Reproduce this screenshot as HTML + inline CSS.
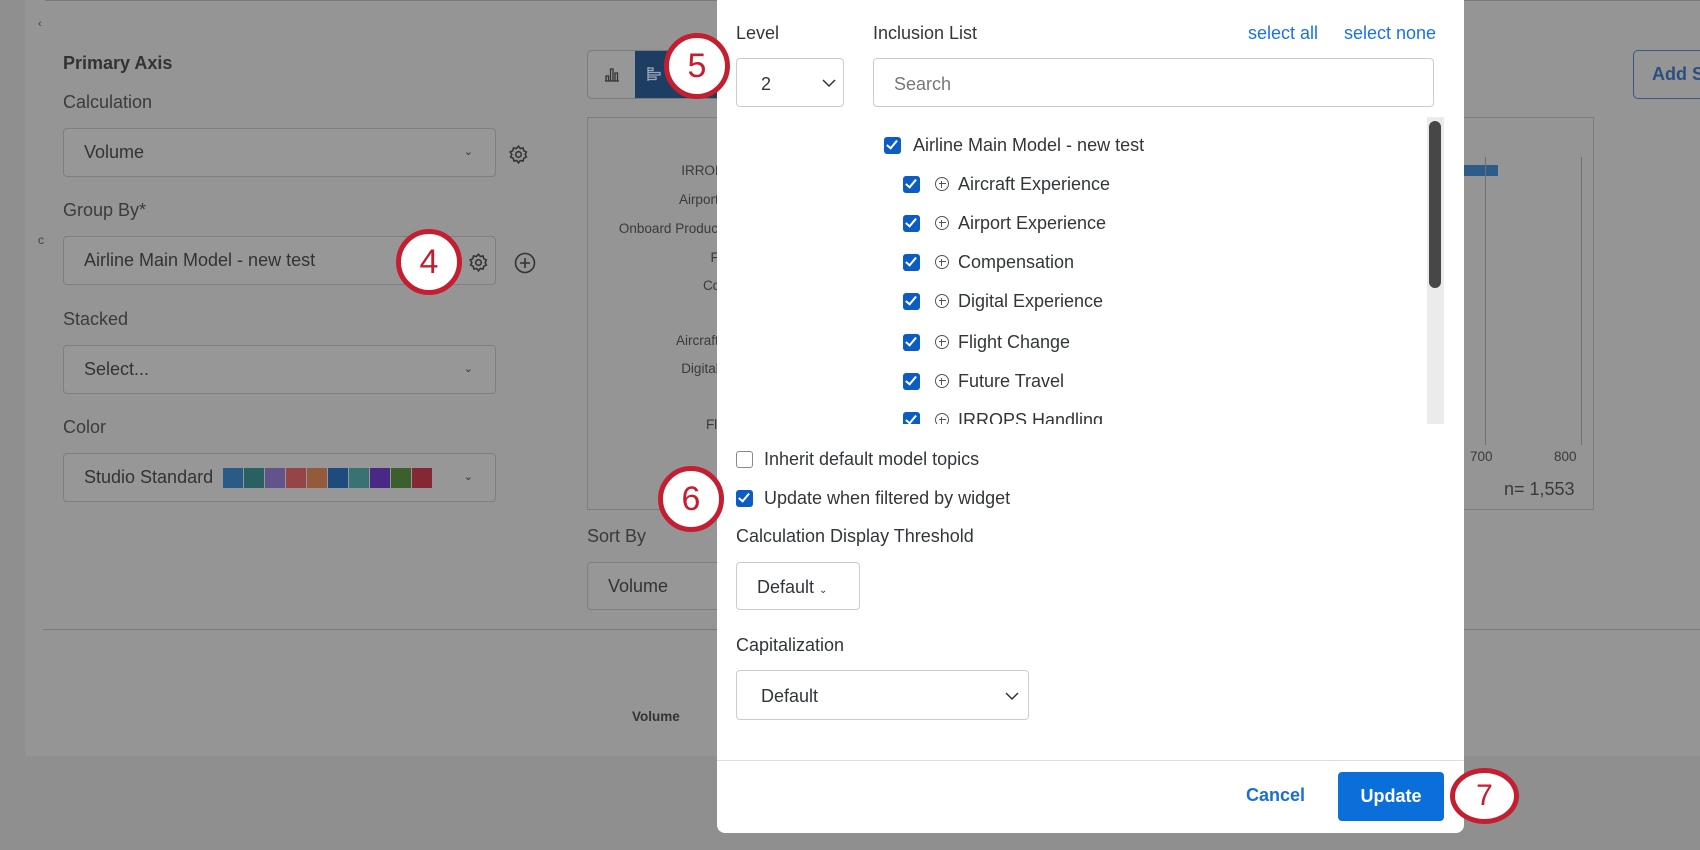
<!DOCTYPE html>
<html><head><meta charset="utf-8"><style>
*{box-sizing:border-box;margin:0;padding:0}
body{width:1700px;height:850px;overflow:hidden;background:#8f8f8f;font-family:"Liberation Sans",sans-serif;position:relative;color:#3a3a3a}
.a{position:absolute}
.panel{left:25px;top:0;width:1675px;height:756px;background:#959595}
.lbl{font-size:18px;color:#3b3b3b}
.sel{border:1px solid #7f7f7f;border-radius:4px;background:#979797;font-size:18px;color:#333;padding-left:20px;display:flex;align-items:center}
.car{position:absolute;right:22px;top:50%;font-size:11px;transform:translateY(-60%);color:#333}
.circ{position:absolute;border:5px solid #c41e30;border-radius:50%;background:#fff;color:#c41e30;font-size:34px;display:flex;align-items:center;justify-content:center;font-family:"Liberation Sans",sans-serif}
.modal{left:717px;top:0;width:747px;height:833px;background:#fff;border-radius:0 0 8px 8px}
.m{color:#32363a;font-size:18px}
.cb{position:absolute;width:17px;height:17px;border-radius:3px;background:#0b5cc4}
.cb::after{content:"";position:absolute;left:5px;top:1px;width:4px;height:9px;border:solid #fff;border-width:0 2.5px 2.5px 0;transform:rotate(40deg)}
.pl{position:absolute;width:14px;height:14px;border:1.3px solid #555;border-radius:50%}
.pl::before{content:"";position:absolute;left:5.2px;top:2.5px;width:1.3px;height:7px;background:#555}
.pl::after{content:"";position:absolute;left:2.5px;top:5.2px;width:7px;height:1.3px;background:#555}
.cl{position:absolute;font-size:13.5px;color:#3a3a3a;text-align:right;width:250px;left:540px}
</style></head><body>
<div class="a panel"></div>
<div class="a" style="left:45px;top:0;width:1655px;height:1px;background:#7a7a7a"></div>
<div class="a" style="left:38px;top:18px;font-size:11px;color:#444">&lsaquo;</div>
<div class="a" style="left:38px;top:233px;font-size:12px;color:#444">c</div>

<div class="a" style="left:63px;top:53px;font-size:18px;font-weight:bold;color:#333">Primary Axis</div>
<div class="a lbl" style="left:63px;top:92px">Calculation</div>
<div class="a sel" style="left:63px;top:128px;width:433px;height:49px">Volume<span class="car">&#8964;</span></div>
<svg class="a" style="left:508px;top:144px" width="21" height="21" viewBox="0 0 24 24" fill="none" stroke="#333" stroke-width="1.8"><circle cx="12" cy="12" r="3.2"/><path d="M12 2.5l2 2.6 3.2-.6.8 3.2 3 1.4-1.4 2.9 1.4 2.9-3 1.4-.8 3.2-3.2-.6-2 2.6-2-2.6-3.2.6-.8-3.2-3-1.4 1.4-2.9L2.5 9.1l3-1.4.8-3.2 3.2.6z"/></svg>
<div class="a lbl" style="left:63px;top:200px">Group By*</div>
<div class="a sel" style="left:63px;top:236px;width:433px;height:49px">Airline Main Model - new test</div>
<svg class="a" style="left:468px;top:252px" width="21" height="21" viewBox="0 0 24 24" fill="none" stroke="#333" stroke-width="1.8"><circle cx="12" cy="12" r="3.2"/><path d="M12 2.5l2 2.6 3.2-.6.8 3.2 3 1.4-1.4 2.9 1.4 2.9-3 1.4-.8 3.2-3.2-.6-2 2.6-2-2.6-3.2.6-.8-3.2-3-1.4 1.4-2.9L2.5 9.1l3-1.4.8-3.2 3.2.6z"/></svg>
<svg class="a" style="left:514px;top:252px" width="22" height="22" viewBox="0 0 22 22" fill="none" stroke="#333" stroke-width="1.6"><circle cx="11" cy="11" r="9.5"/><path d="M11 6v10M6 11h10"/></svg>
<div class="a lbl" style="left:63px;top:309px">Stacked</div>
<div class="a sel" style="left:63px;top:345px;width:433px;height:49px">Select...<span class="car">&#8964;</span></div>
<div class="a lbl" style="left:63px;top:417px">Color</div>
<div class="a sel" style="left:63px;top:453px;width:433px;height:49px">Studio Standard<span style="display:flex;margin-left:10px;gap:1px">
<i style="width:20px;height:20px;background:#2a5a86"></i><i style="width:20px;height:20px;background:#286160"></i><i style="width:20px;height:20px;background:#62548a"></i><i style="width:20px;height:20px;background:#964448"></i><i style="width:20px;height:20px;background:#945a3c"></i><i style="width:20px;height:20px;background:#1f4a7e"></i><i style="width:20px;height:20px;background:#387272"></i><i style="width:20px;height:20px;background:#482985"></i><i style="width:20px;height:20px;background:#3b602e"></i><i style="width:20px;height:20px;background:#862833"></i></span><span class="car">&#8964;</span></div>

<!-- chart toolbar -->
<div class="a" style="left:587px;top:50px;width:140px;height:49px;border:1px solid #7a7a7a;border-radius:5px;background:#979797;overflow:hidden">
<div class="a" style="left:47px;top:0;width:93px;height:49px;background:#1e3d62"></div>
<svg class="a" style="left:15px;top:14px" width="18" height="18" viewBox="0 0 18 18" fill="none" stroke="#333" stroke-width="1.3"><path d="M2 16h14M3 16v-5h2.5v5M7.5 16V4h2.5v12M12 16V8h2.5v8"/></svg>
<svg class="a" style="left:58px;top:14px" width="18" height="18" viewBox="0 0 18 18" fill="none" stroke="#9aa8b8" stroke-width="1.3"><path d="M2 2v14M2 3h5v2.5H2M2 7.5h12V10H2M2 12h8v2.5H2"/></svg>
</div>
<div class="a" style="left:587px;top:117px;width:1007px;height:393px;border:1px solid #7d7d7d"></div>
<div class="cl" style="top:163px">IRROPS Handling</div>
<div class="cl" style="top:192px">Airport Experience</div>
<div class="cl" style="top:221px">Onboard Product &amp; Services</div>
<div class="cl" style="top:250px">Future Travel</div>
<div class="cl" style="top:278px">Compensation</div>
<div class="cl" style="top:333px">Aircraft Experience</div>
<div class="cl" style="top:361px">Digital Experience</div>
<div class="cl" style="top:417px">Flight Change</div>
<div class="a" style="left:1464px;top:165px;width:34px;height:11px;background:#2d5b8a"></div>
<div class="a" style="left:1485px;top:157px;width:1px;height:288px;background:#6e6e6e"></div>
<div class="a" style="left:1581px;top:157px;width:1px;height:288px;background:#6e6e6e"></div>
<div class="a" style="left:1470px;top:449px;font-size:13.5px;color:#3a3a3a">700</div>
<div class="a" style="left:1554px;top:449px;font-size:13.5px;color:#3a3a3a">800</div>
<div class="a" style="left:1504px;top:479px;font-size:18px;color:#3a3a3a">n= 1,553</div>
<div class="a" style="left:1633px;top:50px;width:90px;height:49px;border:1.5px solid #36598a;border-radius:5px;color:#2a4f80;font-weight:bold;font-size:18px;padding:13px 0 0 18px">Add S</div>
<div class="a lbl" style="left:587px;top:526px">Sort By</div>
<div class="a sel" style="left:587px;top:562px;width:140px;height:48px">Volume</div>
<div class="a" style="left:43px;top:629px;width:1657px;height:1px;background:#7a7a7a"></div>
<div class="a" style="left:632px;top:709px;font-size:13.5px;font-weight:bold;color:#333">Volume</div>

<!-- modal -->
<div class="a modal">
<div class="a m" style="left:19px;top:23px">Level</div>
<div class="a m" style="left:156px;top:23px">Inclusion List</div>
<div class="a" style="left:531px;top:23px;font-size:18px;color:#1a73e0">select all</div>
<div class="a" style="left:627px;top:23px;font-size:18px;color:#1a73e0">select none</div>
<div class="a" style="left:19px;top:58px;width:108px;height:49px;border:1px solid #ccc;border-radius:4px;font-size:18px;color:#32363a;padding:15px 0 0 24px">2<svg class="a" style="left:85px;top:20px" width="14" height="9" viewBox="0 0 14 9" fill="none" stroke="#333" stroke-width="1.5"><path d="M1 1l6 6 6-6"/></svg></div>
<div class="a" style="left:156px;top:58px;width:561px;height:49px;border:1px solid #ccc;border-radius:4px;font-size:18px;color:#777;padding:15px 0 0 20px">Search</div>
<div class="a" style="left:710px;top:117px;width:17px;height:307px;background:#ebebeb"></div>
<div class="a" style="left:712px;top:121px;width:12px;height:167px;background:#474747;border-radius:6px"></div>
<div class="a" style="left:0;top:117px;width:700px;height:307px;overflow:hidden">
<div class="cb" style="left:167px;top:20px"></div><div class="a m" style="left:196px;top:18px">Airline Main Model - new test</div>
<div class="cb" style="left:186px;top:59px"></div><div class="pl" style="left:218px;top:60px"></div><div class="a m" style="left:241px;top:57px">Aircraft Experience</div>
<div class="cb" style="left:186px;top:98px"></div><div class="pl" style="left:218px;top:99px"></div><div class="a m" style="left:241px;top:96px">Airport Experience</div>
<div class="cb" style="left:186px;top:137px"></div><div class="pl" style="left:218px;top:138px"></div><div class="a m" style="left:241px;top:135px">Compensation</div>
<div class="cb" style="left:186px;top:176px"></div><div class="pl" style="left:218px;top:177px"></div><div class="a m" style="left:241px;top:174px">Digital Experience</div>
<div class="cb" style="left:186px;top:217px"></div><div class="pl" style="left:218px;top:218px"></div><div class="a m" style="left:241px;top:215px">Flight Change</div>
<div class="cb" style="left:186px;top:256px"></div><div class="pl" style="left:218px;top:257px"></div><div class="a m" style="left:241px;top:254px">Future Travel</div>
<div class="cb" style="left:186px;top:295px"></div><div class="pl" style="left:218px;top:296px"></div><div class="a m" style="left:241px;top:293px">IRROPS Handling</div>
</div>
<div class="a" style="left:19px;top:451px;width:17px;height:17px;border:1.5px solid #888;border-radius:3px"></div>
<div class="a m" style="left:47px;top:449px">Inherit default model topics</div>
<div class="cb" style="left:19px;top:490px"></div>
<div class="a m" style="left:47px;top:488px">Update when filtered by widget</div>
<div class="a m" style="left:19px;top:526px">Calculation Display Threshold</div>
<div class="a" style="left:19px;top:562px;width:124px;height:48px;border:1px solid #ccc;border-radius:4px;font-size:18px;color:#32363a;padding:14px 0 0 20px">Default <span style="font-size:10px">&#8964;</span></div>
<div class="a m" style="left:19px;top:635px">Capitalization</div>
<div class="a" style="left:19px;top:670px;width:293px;height:50px;border:1px solid #ccc;border-radius:4px;font-size:18px;color:#32363a;padding:15px 0 0 24px">Default<svg class="a" style="left:268px;top:21px" width="14" height="9" viewBox="0 0 14 9" fill="none" stroke="#333" stroke-width="1.5"><path d="M1 1l6 6 6-6"/></svg></div>
<div class="a" style="left:0;top:760px;width:747px;height:1px;background:#ddd"></div>
<div class="a" style="left:529px;top:785px;font-size:18px;font-weight:bold;color:#1a6fd6">Cancel</div>
<div class="a" style="left:621px;top:772px;width:106px;height:49px;background:#0a6fd8;border-radius:4px;color:#fff;font-size:18px;font-weight:bold;text-align:center;line-height:49px">Update</div>
</div>

<div class="circ" style="left:396px;top:229px;width:66px;height:66px">4</div>
<div class="circ" style="left:664px;top:33px;width:66px;height:66px">5</div>
<div class="circ" style="left:658px;top:466px;width:66px;height:66px">6</div>
<div class="circ" style="left:1450px;top:768px;width:69px;height:56px;font-size:30px">7</div>
</body></html>
